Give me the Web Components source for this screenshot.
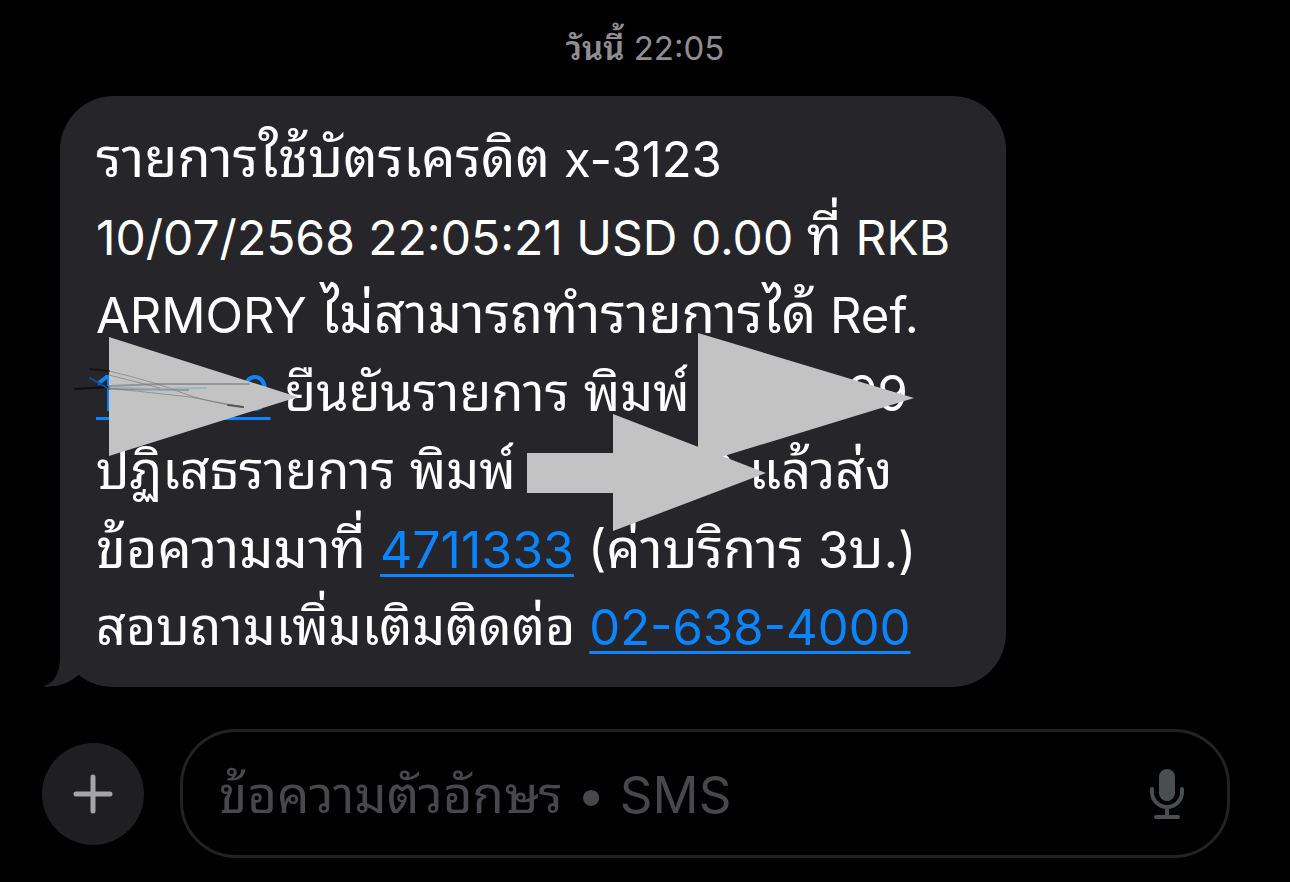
<!DOCTYPE html>
<html lang="th">
<head>
<meta charset="utf-8">
<meta name="viewport" content="width=device-width, initial-scale=1">
<title>SMS</title>
<style>
  html, body { margin: 0; background: #000; }
  body { font-family: Inter, Thonburi, "Noto Sans Thai Looped", Sarabun, Loma, Garuda, Waree, Umpush, "Noto Sans Thai", "Noto Sans", sans-serif; }
  message-line span { font-size: 54px; line-height: 0; }
  message-line.compact span { font-size: 52px; }
  message-line.figures { font-size: 48px; }
  message-line.large { font-size: 50px; }
  time-stamp span { line-height: 0; font-weight: 600; }
</style>
</head>
<body>
<sms-thread>
  <time-stamp slot="time"><span>วันนี้</span> 22:05</time-stamp>
  <message-bubble>
    <message-line><span>รายการใช้บัตรเครดิต</span> x-3123</message-line>
    <message-line class="figures">10/07/2568 22:05:21 USD 0.00 <span>ที่</span> RKB</message-line>
    <message-line>ARMORY <span>ไม่สามารถทำรายการได้</span> Ref.</message-line>
    <message-line class="compact"><data-link to="tel:100000">100000</data-link> <span>ยืนยันรายการ พิมพ์</span> 1000099</message-line>
    <message-line class="compact"><span>ปฏิเสธรายการ พิมพ์</span> 1000000 <span>แล้วส่ง</span></message-line>
    <message-line class="large"><span>ข้อความมาที่</span> <data-link to="tel:4711333">4711333</data-link> (<span>ค่าบริการ</span> 3<span>บ</span>.)</message-line>
    <message-line class="compact"><span>สอบถามเพิ่มเติมติดต่อ</span> <data-link to="tel:026384000">02-638-4000</data-link></message-line>
    <arrow-marks slot="marks"></arrow-marks>
  </message-bubble>
  <message-composer slot="composer"></message-composer>
</sms-thread>
<script>
const define = (name, html, setup) => customElements.define(name, class extends HTMLElement {
  constructor() {
    super();
    const t = document.createElement('template');
    t.innerHTML = html;
    this.attachShadow({ mode: 'open' }).append(t.content.cloneNode(true));
  }
  connectedCallback() { if (setup) setup(this); }
});

define('sms-thread', `
<style>
  :host { display: flex; flex-direction: column; min-height: 100vh; box-sizing: border-box; padding: 24px 60px; color: #fff; background: #000; }
  main { display: flex; flex-direction: column; align-items: flex-start; margin-top: 24px; margin-bottom: 42px; }
  footer { margin-left: -18px; }
</style>
<slot name="time"></slot>
<main><slot></slot></main>
<footer><slot name="composer"></slot></footer>`);

define('time-stamp', `
<style>
  :host { display: block; text-align: center; color: #8e8e93; font-size: 33px; line-height: 48px; }
</style>
<slot></slot>`);

define('message-bubble', `
<style>
  :host { display: block; position: relative; isolation: isolate; box-sizing: border-box; width: 946px; max-width: 100%; padding: 25px 36px 20px; border-radius: 54px; background: #26252a; font-size: 49px; line-height: 78px; }
  .tail { position: absolute; z-index: -1; left: -18px; bottom: 0; width: 90px; height: 60px; }
</style>
<svg class="tail" viewBox="0 0 90 60" aria-hidden="true">
  <path d="M18 0H90V60H72Q50 60 37 48Q23 60 7 60Q2 60 2 59Q18 54 18 30Z" fill="#26252a"/>
  <path d="M37 48Q50 60 72 60H37Q26 60 4 60Q23 60 37 48Z" fill="#000"/>
</svg>
<slot></slot>
<slot name="marks"></slot>`);

define('message-line', `
<style>:host { display: block; white-space: nowrap; }</style>
<slot></slot>`);

define('data-link', `
<style>
  a { color: #0a84ff; text-decoration: underline; text-decoration-thickness: 3px; text-underline-offset: 6px; text-decoration-skip-ink: none; }
</style>
<a><slot></slot></a>`, el => { el.shadowRoot.querySelector('a').href = el.getAttribute('to'); });

define('arrow-marks', `
<style>
  :host { position: absolute; left: 0; top: 0; pointer-events: none; }
  svg { display: block; width: 946px; height: 591px; overflow: visible; }
</style>
<svg viewBox="60 96 946 591" aria-hidden="true">
  <g fill="#c3c3c3">
    <path d="M109 337L298 397L109 456Z"/>
    <path d="M698 333L914 398L698 464Z"/>
    <path d="M527 453H613V414L766 473L613 531V493H527Z"/>
  </g>
  <g fill="none" stroke-linecap="round">
    <path d="M90 369L109 371" stroke="#151518" stroke-width="2"/>
    <path d="M75 389L109 387" stroke="#0e0e10" stroke-width="2"/>
    <path d="M90 378L104 386L109 389" stroke="#174f91" stroke-width="2"/>
    <path d="M109 371Q155 382 180 392T243 407M109 375L160 388M109 388L190 397L243 407" stroke="#777" stroke-width="1" opacity=".65"/>
    <path d="M109 386L160 384L249 384M109 389L188 390" stroke="#777" stroke-width="2" opacity=".6" stroke-dasharray="3 1"/>
    <path d="M109 387L150 389L206 388" stroke="#78a8dc" stroke-width="2" opacity=".55"/>
    <path d="M228 405L243 407" stroke="#555" stroke-width="2"/>
  </g>
</svg>`);

define('message-composer', `
<style>
  :host { display: flex; align-items: center; gap: 36px; }
  button { flex: none; display: grid; place-items: center; border: 0; padding: 0; cursor: pointer; }
  .add { width: 102px; height: 102px; border-radius: 50%; background: #1f1f21; }
  .field { flex: 1; min-width: 0; display: flex; align-items: center; box-sizing: border-box; height: 129px; border: 3px solid #222224; border-radius: 56px; padding: 0 36px; }
  input { flex: 1; min-width: 0; height: 100px; border: 0; outline: 0; padding: 2px 0 0; background: none; color: #fff; font: inherit; font-size: 51px; }
  input::placeholder { color: #48474c; opacity: 1; }
  .mic { width: 48px; height: 60px; background: none; }
  svg { display: block; }
</style>
<button class="add" type="button" aria-label="เพิ่ม">
  <svg width="40" height="40" viewBox="0 0 40 40"><path d="M20 3V37M3 20H37" stroke="#a5a5a7" stroke-width="5" stroke-linecap="round"/></svg>
</button>
<div class="field">
  <input type="text" aria-label="ข้อความ" placeholder="ข้อความตัวอักษร • SMS">
  <button class="mic" type="button" aria-label="ป้อนตามคำบอก">
    <svg width="36" height="50" viewBox="0 0 36 50" fill="none" stroke="#4b4e50" stroke-width="4" stroke-linecap="round"><rect x="10" y="0" width="16" height="32" rx="8" fill="#4b4e50" stroke="none"/><path d="M3 20V23A15 15 0 0 0 33 23V20M18 39V48M7 48H29"/></svg>
  </button>
</div>`);
</script>
</body>
</html>
